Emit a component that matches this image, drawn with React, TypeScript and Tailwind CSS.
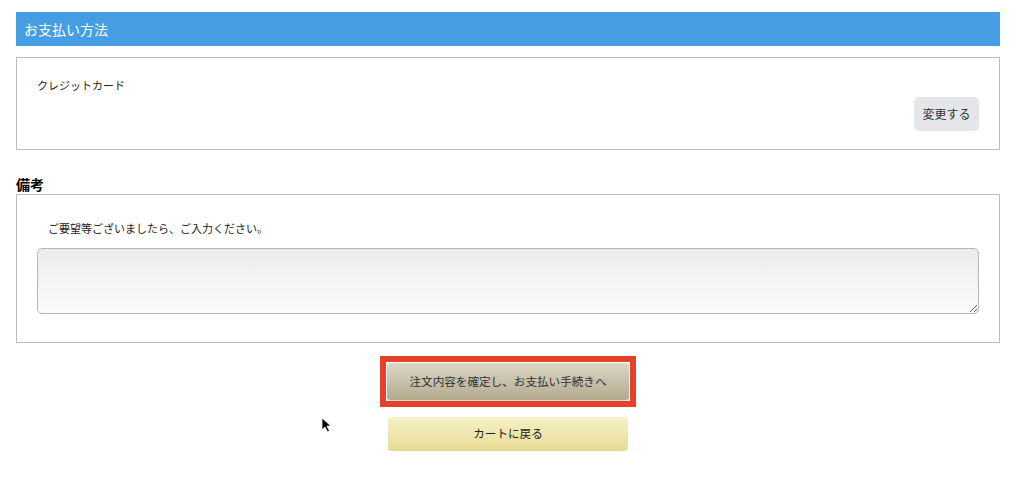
export default function App() {
  return (
    <div
      className="relative w-[1024px] h-[479px] bg-white overflow-hidden"
      style={{ fontFamily: '"Noto Sans CJK JP", "Noto Sans", sans-serif' }}
    >
      <div className="w-[984px] ml-4 pt-3">
        {/* payment method */}
        <div className="h-[34px] bg-[#469de2] text-white text-[14px] flex items-center pl-2">
          お支払い方法
        </div>
        <div className="mt-[11px] h-[93px] border border-[#bdbdbd] flex flex-col px-5">
          <div className="text-[11px] text-[#222] pt-[19px]">クレジットカード</div>
          <div className="flex justify-end mt-[3px]">
            <button className="w-[65px] h-[34px] rounded-[5px] bg-[#e4e6e9] text-[12px] text-[#333]">
              変更する
            </button>
          </div>
        </div>

        {/* remarks */}
        <div className="mt-[25px] text-[14px] font-bold text-black leading-[18px]">備考</div>
        <div className="mt-[1px] h-[149px] border border-[#bdbdbd] px-5">
          <div className="text-[11px] text-[#222] pt-[25px] pl-[11px] leading-[16px]">
            ご要望等ございましたら、ご入力ください。
          </div>
          <textarea className="mt-[12px] w-full h-[66px] rounded-[5px] border border-[#b8b8b8] bg-gradient-to-b from-[#ececec] to-[#fbfbfb] outline-none block" />
        </div>

        {/* actions */}
        <div className="flex flex-col items-center mt-[13px]">
          <div className="border-[6px] border-[#e5402a] p-px bg-white">
            <button className="w-[242px] h-[37px] rounded-[3px] bg-gradient-to-b from-[#dcd6c4] to-[#b3aa8f] text-[11.6px] text-[#333] shadow-[0_1px_1px_rgba(0,0,0,0.15)]">
              注文内容を確定し、お支払い手続きへ
            </button>
          </div>
          <button className="mt-[10px] w-[240px] h-[34px] rounded-[3px] bg-gradient-to-b from-[#f6f1c6] to-[#e6db95] text-[11.6px] text-[#222]">
            カートに戻る
          </button>
        </div>
      </div>

      {/* mouse cursor */}
      <svg className="absolute left-[321px] top-[417px]" width="11" height="17" viewBox="0 0 11 17">
        <path d="M1 1 L1 13 L4 10 L6.5 15 L8.5 14 L6 9 L10 9 Z" fill="#000" stroke="#fff" strokeWidth="0.8" />
      </svg>
    </div>
  );
}
